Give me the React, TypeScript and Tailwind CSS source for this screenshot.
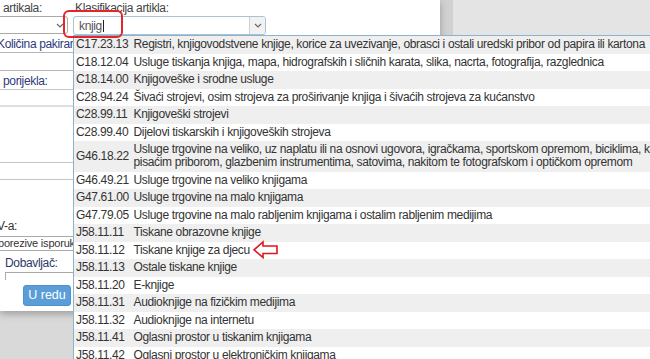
import React from "react";

const rows: { code: string; text: React.ReactNode; double?: boolean }[] = [
  { code: "C17.23.13", text: "Registri, knjigovodstvene knjige, korice za uvezivanje, obrasci i ostali uredski pribor od papira ili kartona" },
  { code: "C18.12.04", text: "Usluge tiskanja knjiga, mapa, hidrografskih i sličnih karata, slika, nacrta, fotografija, razglednica" },
  { code: "C18.14.00", text: "Knjigoveške i srodne usluge" },
  { code: "C28.94.24", text: "Šivaći strojevi, osim strojeva za proširivanje knjiga i šivaćih strojeva za kućanstvo" },
  { code: "C28.99.11", text: "Knjigoveški strojevi" },
  { code: "C28.99.40", text: "Dijelovi tiskarskih i knjigoveških strojeva" },
  {
    code: "G46.18.22",
    double: true,
    text: (
      <>
        Usluge trgovine na veliko, uz naplatu ili na osnovi ugovora, igračkama, sportskom opremom, biciklima, knjigama, novinama, časopisima,
        <br />
        pisaćim priborom, glazbenim instrumentima, satovima, nakitom te fotografskom i optičkom opremom
      </>
    ),
  },
  { code: "G46.49.21", text: "Usluge trgovine na veliko knjigama" },
  { code: "G47.61.00", text: "Usluge trgovine na malo knjigama" },
  { code: "G47.79.05", text: "Usluge trgovine na malo rabljenim knjigama i ostalim rabljenim medijima" },
  { code: "J58.11.11", text: "Tiskane obrazovne knjige" },
  { code: "J58.11.12", text: "Tiskane knjige za djecu" },
  { code: "J58.11.13", text: "Ostale tiskane knjige" },
  { code: "J58.11.20", text: "E-knjige" },
  { code: "J58.11.31", text: "Audioknjige na fizičkim medijima" },
  { code: "J58.11.32", text: "Audioknjige na internetu" },
  { code: "J58.11.41", text: "Oglasni prostor u tiskanim knjigama" },
  { code: "J58.11.42", text: "Oglasni prostor u elektroničkim knjigama" },
];

function Chevron() {
  return (
    <svg width="8" height="5" viewBox="0 0 8 5" className="block">
      <path d="M1 1 L4 4 L7 1" fill="none" stroke="#666" strokeWidth="1.2" />
    </svg>
  );
}

export default function App() {
  return (
    <div className="relative w-[650px] h-[359px] overflow-hidden bg-[#d9d9d9] font-['Liberation_Sans',Arial,sans-serif] text-[12px] tracking-[-0.35px] text-[#333]">
      <div className="flex h-[311px]">
        {/* dialog */}
        <div className="flex w-[440px] h-[311px] bg-white shadow-[0_3px_7px_rgba(0,0,0,0.28)] relative z-10">
          {/* left column */}
          <div className="flex flex-col w-[73px] shrink-0 overflow-hidden">
            <div className="h-[16px] leading-[16px] pl-[3px] text-[#444] whitespace-nowrap">artikala:</div>
            <div className="flex items-center justify-end h-[18px] w-[72px] -ml-[4px] border border-[#aaa] rounded-r-[3px] pr-[3px]">
              <Chevron />
            </div>
            <div className="h-[18px] pt-[3px] leading-[15px] -ml-[3px] text-[#2e3a7c] whitespace-nowrap">Količina pakiranja:</div>
            <div className="h-[19px] -ml-[4px] w-[90px] border border-[#b5b5b5]"></div>
            <div className="h-[18px] pt-[3px] leading-[15px] pl-[3px] text-[#2e3a7c] whitespace-nowrap">porijekla:</div>
            <div className="h-[18px] -ml-[4px] w-[90px] border border-[#c4c4c4] border-b-2 border-b-[#dedede]"></div>
            <div className="h-[55px]"></div>
            <div className="h-[18px] -ml-[4px] w-[90px] border border-[#c4c4c4]"></div>
            <div className="h-[38px]"></div>
            <div className="h-[16px] leading-[16px] -ml-[3px] text-[#333] whitespace-nowrap">V-a:</div>
            <div className="h-[2px]"></div>
            <div className="h-[15px] -ml-[2px] w-[90px] border border-[#aaa] leading-[13px] text-[11px] tracking-[-0.2px] whitespace-nowrap overflow-hidden">
              <span className="block -ml-[1px]">porezive isporuke</span>
            </div>
            <div className="h-[21px] pt-[5px] leading-[15px] pl-[5px] text-[#2e3a66] whitespace-nowrap">Dobavljač:</div>
            <div className="h-[8px] ml-[5px] w-[90px] border-t border-l border-[#aaa]"></div>
            <div className="pt-[5px] pl-[23px]">
              <div className="flex items-center justify-center w-[48px] h-[21px] rounded-[3px] bg-[#5b9dd8] border border-[#4f91cc] text-white text-[12.5px] tracking-normal">
                U redu
              </div>
            </div>
          </div>
          {/* right column */}
          <div className="flex flex-col">
            <div className="h-[16px] leading-[16px] pl-[2px] text-[#444] whitespace-nowrap">Klasifikacija artikla:</div>
            <div className="flex w-[193px] h-[19px] border border-[#a9c3d6] rounded-[3px] bg-white">
              <div className="flex items-center flex-1 pl-[5px] text-[#555]">
                <span>knjig</span>
                <span className="inline-block w-[1px] h-[12px] bg-[#222] ml-[1px]"></span>
              </div>
              <div className="flex items-center justify-center w-[16px] bg-[#f2f2f2] border-l border-[#d0d0d0] rounded-r-[3px]">
                <Chevron />
              </div>
            </div>
          </div>
        </div>
        <div className="w-[13px] h-[311px] bg-[#d1d1d1]"></div>
        <div className="flex-1 h-[311px] bg-[#e4e4e4]"></div>
      </div>

      {/* dropdown list */}
      <div className="absolute left-[73px] top-[35px] w-[640px] z-20 bg-white border-l border-t border-[#8db2cf] text-[#333]">
        {rows.map((r, i) => (
          <div
            key={r.code}
            className={`flex items-center py-[2.05px] leading-[13.4px] whitespace-nowrap ${i % 2 === 0 ? "bg-[#efefef]" : "bg-white"}`}
          >
            <div className="w-[59.5px] shrink-0 pl-[2px]">{r.code}</div>
            <div>{r.text}</div>
          </div>
        ))}
      </div>

      {/* red annotation box */}
      <div className="absolute left-[63px] top-[10px] w-[60px] h-[28px] border-2 border-[#e3262b] rounded-[6px] z-30"></div>

      {/* red arrow */}
      <svg className="absolute left-[252px] top-[240px] z-30" width="27" height="20" viewBox="0 0 27 20">
        <polygon
          points="2,9.8 11,2 11,6 25,6 25,13.5 11,13.5 11,17.5"
          fill="white"
          stroke="#e3141c"
          strokeWidth="1.6"
          strokeLinejoin="miter"
        />
      </svg>
    </div>
  );
}
